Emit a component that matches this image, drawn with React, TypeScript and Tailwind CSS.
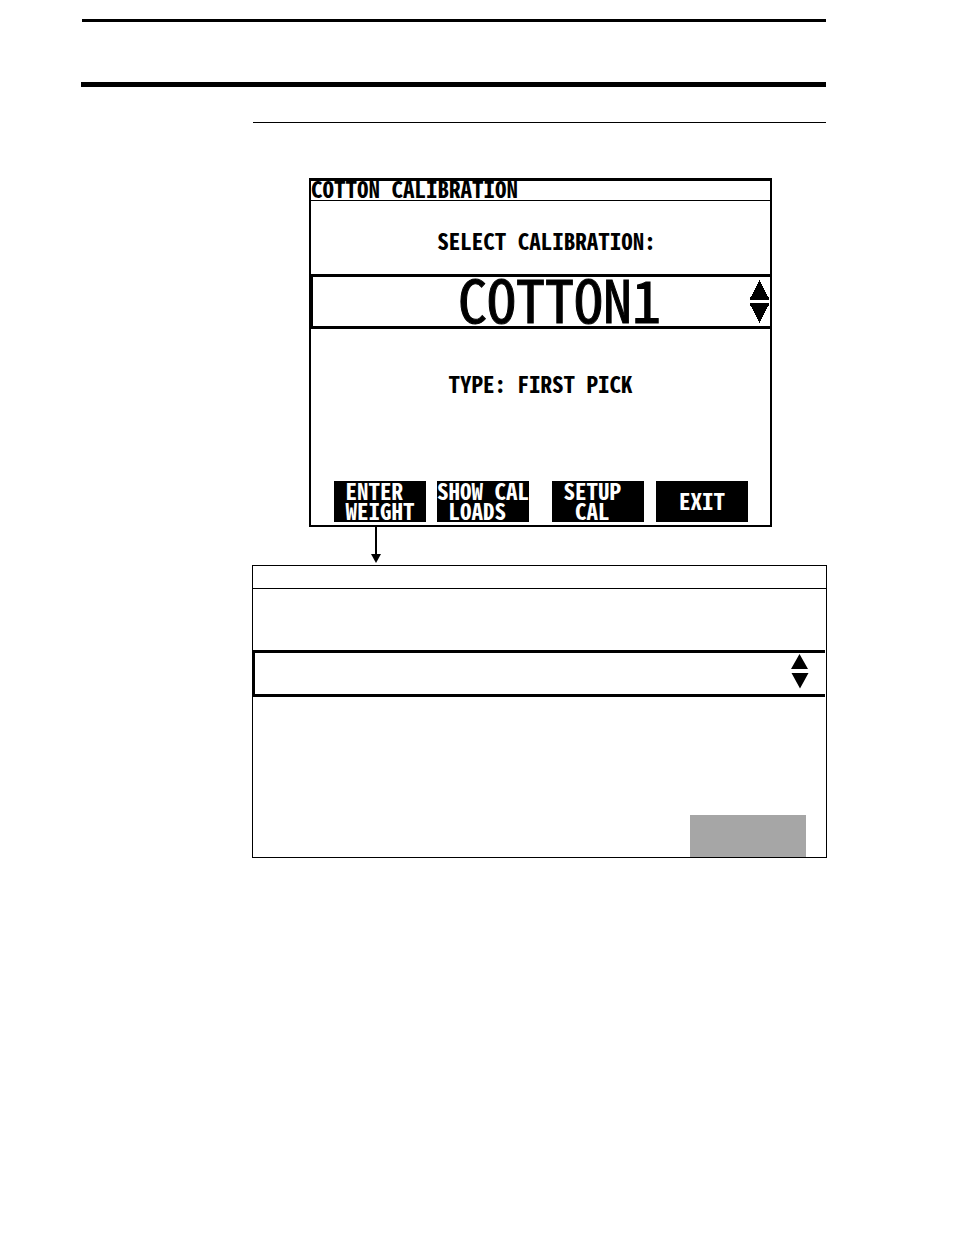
import { useState } from "react";
import clsx from "clsx";

const calibrations = ["COTTON1", "COTTON2", "COTTON3"];

// Labels sit on the terminal's 8 column character grid
const softKeys = [
  [" ENTER\n WEIGHT", "SHOW CAL\n LOADS"],
  [" SETUP\n  CAL", "  EXIT"],
];

function SoftKey({ label }: { label: string }) {
  return (
    <button
      type="button"
      className="flex h-[41px] w-[92px] items-center whitespace-pre bg-black pb-1 text-left leading-5 text-white"
    >
      {label}
    </button>
  );
}

function Stepper({ onStep }: { onStep: (by: number) => void }) {
  return (
    <div className="flex flex-col gap-[3px] pr-px">
      <button type="button" aria-label="Next calibration" onClick={() => onStep(1)}>
        <svg width="19" height="20" viewBox="0 0 19 20" shapeRendering="crispEdges" className="block">
          <path d="M9 0h1v2h1v2h1v2h1v2h1v2h1v2h1v2h1v2h1v1h1v3H0v-3h1v-1h1v-2h1v-2h1v-2h1V8h1V6h1V4h1V2h1z" />
        </svg>
      </button>
      <button type="button" aria-label="Previous calibration" onClick={() => onStep(-1)}>
        <svg width="19" height="20" viewBox="0 0 19 20" shapeRendering="crispEdges" className="block">
          <path d="M9 20h1v-2h1v-2h1v-2h1v-2h1v-2h1V8h1V6h1V4h1V3h1V0H0v3h1v1h1v2h1v2h1v2h1v2h1v2h1v2h1v2h1z" />
        </svg>
      </button>
    </div>
  );
}

function CalibrationScreen() {
  const [index, setIndex] = useState(0);
  const step = (by: number) =>
    setIndex((index + by + calibrations.length) % calibrations.length);

  return (
    <section className="ml-14 max-w-[463px] border-2 border-t-3 border-black text-[23px] leading-5 font-bold">
      <h1 className="h-5 border-b border-black leading-[14px]">COTTON CALIBRATION</h1>

      <div className="flex h-[73px] items-center justify-center pt-1 pl-3">
        <label htmlFor="calibration">SELECT CALIBRATION:</label>
      </div>

      <div className="flex h-[55px] items-center border-y-3 border-l-2 border-black">
        <input
          id="calibration"
          readOnly
          value={calibrations[index]}
          className="h-full min-w-0 flex-1 pb-2 pl-14 text-center text-[58px] leading-none font-medium outline-none [-webkit-text-stroke:1px_black]"
        />
        <Stepper onStep={step} />
      </div>

      <p className="flex h-28 items-center justify-center pb-1">TYPE: FIRST PICK</p>

      <div className="mt-10 flex justify-between pr-[22px] pb-[3px] pl-[23px]">
        {softKeys.map((pair, i) => (
          <div key={i} className={clsx("flex", i === 0 ? "gap-[11px]" : "gap-3")}>
            {pair.map((label) => (
              <SoftKey key={label} label={label} />
            ))}
          </div>
        ))}
      </div>
    </section>
  );
}

function WeightScreen() {
  return (
    <section className="-mx-px border border-black">
      <div className="h-[23px] border-b border-black" />

      <div className="mt-[61px] mr-px flex h-[47px] justify-end border-y-3 border-l-2 border-black pr-4">
        <svg width="18" height="36" viewBox="0 0 18 36">
          <path d="M8.5 1l8.5 15H0zM.5 20h17L9 35.5z" />
        </svg>
      </div>

      <div className="mt-[118px] flex justify-end pr-5">
        <div className="h-[42px] w-[116px] bg-[#a6a6a6]" />
      </div>
    </section>
  );
}

export default function App() {
  return (
    <main className="min-h-screen bg-white pt-[19px] pr-32 pb-16 pl-[81px] font-['Noto_Sans_Mono_CJK_JP','DejaVu_Sans_Mono',monospace] text-black">
      <header className="flex flex-col gap-[60px]">
        <div className="ml-px h-[3px] bg-black" />
        <div className="h-[5px] bg-black" />
      </header>

      <div className="mt-[35px] ml-[172px]">
        <div className="mb-[55px] h-px bg-black" />

        <CalibrationScreen />

        <svg width="10" height="38" viewBox="0 0 10 38" className="ml-[118px] block">
          <path d="M5 0v30" stroke="black" strokeWidth="2" />
          <path d="M0 27h10L5 36z" />
        </svg>

        <WeightScreen />
      </div>
    </main>
  );
}
